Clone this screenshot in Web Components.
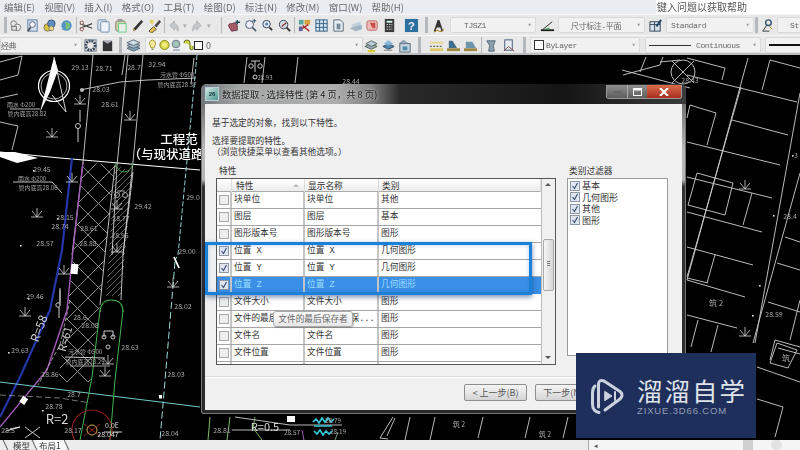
<!DOCTYPE html>
<html>
<head>
<meta charset="utf-8">
<style>
  html, body { margin: 0; padding: 0; background: #000; overflow: hidden; }
  body { font-family: "Noto Sans CJK SC", "Liberation Sans", sans-serif; }
</style>
</head>
<body>
<cad-app>
  <menu-bar></menu-bar>
  <tool-bar row="1"></tool-bar>
  <tool-bar row="2"></tool-bar>
  <cad-canvas>
    <prop-dialog></prop-dialog>
    <brand-badge></brand-badge>
  </cad-canvas>
  <tab-strip></tab-strip>
</cad-app>

<script>
const CJK = '"Noto Sans CJK SC", "Liberation Sans", sans-serif';
const MONO = '"Liberation Mono", "Noto Sans CJK SC", monospace';

class CadApp extends HTMLElement {
  constructor() {
    super();
    this.attachShadow({ mode: 'open' });
    this.shadowRoot.innerHTML = `
      <style>
        :host { display: grid; width: 800px; height: 450px; grid-template-rows: 14px 21px 20px 385px 10px; overflow: hidden; }
      </style>
      <slot></slot>`;
  }
}

class MenuBar extends HTMLElement {
  constructor() {
    super();
    this.attachShadow({ mode: 'open' });
    const items = ['编辑(E)', '视图(V)', '插入(I)', '格式(O)', '工具(T)', '绘图(D)', '标注(N)', '修改(M)', '窗口(W)', '帮助(H)'];
    this.shadowRoot.innerHTML = `
      <style>
        :host { display: flex; align-items: center; background: #e9edf2; color: #6a6a6a; font: 9.5px/14px ${CJK}; filter: blur(.3px); }
        .items { display: flex; gap: 9.2px; padding-left: 4px; flex: 1; }
        .help { width: 144px; height: 14px; background: #fff; color: #555; padding-left: 1px; box-sizing: border-box; font-size: 10px; }
      </style>
      <div class="items">${items.map(t => `<span>${t}</span>`).join('')}</div>
      <div class="help">键入问题以获取帮助</div>`;
  }
}

const ICONS = {
  print: '<circle cx="6" cy="6" r="3" fill="none" stroke="#777"/><circle cx="10" cy="10" r="3.5" fill="#eee" stroke="#777"/><rect x="4" y="9" width="5" height="4" fill="#ddd" stroke="#777"/>',
  preview: '<rect x="3" y="2" width="10" height="12" fill="#cfe3f4" stroke="#5b7d9e"/><circle cx="8" cy="7" r="3" fill="#fff" stroke="#557"/><path d="M3 14l3-4" stroke="#555" stroke-width="2"/>',
  publish: '<circle cx="6" cy="10" r="4" fill="#d9c23c" stroke="#776"/><circle cx="10" cy="6" r="4" fill="#5a8fc8" stroke="#456"/><circle cx="10" cy="11" r="2.5" fill="#eadf88" stroke="#776"/>',
  globe: '<circle cx="8" cy="8" r="5.5" fill="#4f93c9"/><path d="M5 4q3 2 2 5t3 3q3-3 1-7z" fill="#7fbf7a"/><path d="M3 13l2-2" stroke="#999"/>',
  cut: '<path d="M1 6l13 5M1 11l13-5" stroke="#444" stroke-width="1.2"/><circle cx="3" cy="5" r="1.8" fill="#fff" stroke="#844"/><circle cx="3" cy="12" r="1.8" fill="#fff" stroke="#844"/>',
  copy: '<rect x="2" y="2" width="9" height="11" rx="1" fill="#dfeaf5" stroke="#6d8aa6"/><rect x="5" y="4" width="9" height="11" rx="1" fill="#eef4fa" stroke="#6d8aa6"/>',
  paste: '<rect x="3" y="3" width="10" height="11" rx="2" fill="#d7d39a" stroke="#777"/><rect x="6" y="6" width="8" height="9" fill="#e7efe6" stroke="#6c8"/><rect x="5" y="1" width="5" height="3" fill="#999"/>',
  brush: '<path d="M3 14l3-1 8-9-2-2-8 9z" fill="#333"/><path d="M3 14l1-3 2 2z" fill="#c9a34e"/>',
  match: '<path d="M2 14l5-5 3 3-5 4z" fill="#e0bf47" stroke="#654"/><path d="M8 8l5-6 2 2-5 6z" fill="#4a4a4a"/><rect x="3" y="2" width="4" height="4" fill="#e8d16a"/>',
  undo: '<path d="M4 8l5-5v3q5 1 4 8q-2-4-4-4v3z" fill="#c4c7ca" stroke="#b3b6ba"/>',
  redo: '<path d="M12 8l-5-5v3q-5 1-4 8q2-4 4-4v3z" fill="#c4c7ca" stroke="#b3b6ba"/>',
  pan: '<path d="M3 9q-1-3 3-3l4-1 2 3v5l-6 1z" fill="#a65a68" stroke="#634"/><path d="M12 2v5M10 4.5h5" stroke="#245" stroke-width="1.4"/>',
  zoomplus: '<circle cx="7" cy="7" r="4.2" fill="#eef" stroke="#456"/><path d="M10 10l4 4" stroke="#456" stroke-width="1.6"/><path d="M12 1v4M10 3h4" stroke="#256" stroke-width="1"/>',
  zoomwin: '<circle cx="7" cy="6.5" r="4" fill="#dfe8f2" stroke="#345"/><circle cx="7" cy="6.5" r="1.6" fill="#58a"/><path d="M10 10l3 3" stroke="#333" stroke-width="2"/>',
  zoomback: '<circle cx="7" cy="7" r="4.5" fill="#cfdbe6" stroke="#345"/><path d="M5 9l5-4" stroke="#933" stroke-width="1.4"/><path d="M10 10l4 4" stroke="#333" stroke-width="2"/>',
  props: '<rect x="2" y="2" width="5" height="5" fill="#5a9"/><rect x="8" y="2" width="6" height="5" fill="#d6a23c"/><path d="M3 13l9-6M6 8l7 6" stroke="#a33" stroke-width="1.6"/><rect x="2" y="9" width="4" height="5" fill="#669"/>',
  grid: '<rect x="2" y="2" width="12" height="12" fill="#d5e4ef" stroke="#2f5d82"/><path d="M6 2v12M10 2v12M2 6h12M2 10h12" stroke="#2f5d82"/>',
  doc: '<path d="M3 2h7l3 3v9h-10z" fill="#e8eef3" stroke="#567"/><path d="M6 6h4v6H6z" fill="#789"/>',
  stack: '<path d="M2 11l8-4 5 1v4l-7 2z" fill="#9fb4c5"/><path d="M4 7l9-3 1 3-9 3z" fill="#c2ced8"/>',
  red: '<rect x="2" y="3" width="11" height="10" rx="2" fill="#eebcb9" stroke="#b66"/><path d="M5 5h6v6H8z" fill="#c9504d"/>',
  calc: '<rect x="3" y="1" width="10" height="14" fill="#3a3a3a"/><rect x="5" y="3" width="6" height="2" fill="#cfe"/><path d="M5 7h6M5 9.5h6M5 12h6" stroke="#ddd" stroke-dasharray="1.5 1"/>',
  help: '<rect x="1" y="1" width="14" height="14" fill="#2d6f9f"/><text x="8" y="12.5" text-anchor="middle" font-size="12" font-weight="700" font-family="Liberation Sans" fill="#eef">?</text>',
  textstyle: '<path d="M3 14l4-12h2l4 12h-2l-1-4H6l-1 4z" fill="#333"/><path d="M3 15q4-3 6-1t5-2" stroke="#a70" fill="none"/>',
  dimstyle: '<path d="M1 13h14" stroke="#222" stroke-width="2"/><path d="M2 13l11-9" stroke="#222"/><path d="M4 12l6-2v2z" fill="#3a5"/>',
  tablestyle: '<rect x="2" y="4" width="11" height="10" fill="#d8e3ec" stroke="#345"/><path d="M2 7h11M7 4v10" stroke="#345"/><path d="M9 9l5-7" stroke="#246" stroke-width="2"/>',
  mleader: '<circle cx="9" cy="5" r="3" fill="none" stroke="#357" stroke-width="1.5"/><path d="M7 8l-4 6h7" fill="none" stroke="#333"/><path d="M10 9l3 3" stroke="#a70"/>',
  wsset: '<circle cx="8" cy="8" r="5" fill="none" stroke="#345" stroke-width="3" stroke-dasharray="2 1"/><rect x="2" y="2" width="12" height="12" fill="none" stroke="#678"/>',
  wslock: '<rect x="3" y="3" width="10" height="11" fill="#333"/><path d="M3 3l5 3 5-3" fill="#aab"/>',
  layers: '<path d="M1 11l7 3 7-3-7-3z" fill="#7fa0b0" stroke="#567"/><path d="M1 8l7 3 7-3-7-3z" fill="#a5bcc8" stroke="#567"/><path d="M1 5l7 3 7-3-7-3z" fill="#cfdde4" stroke="#567"/>',
  layerset: '<path d="M1 9l7 3 6-3-7-3z" fill="#9ab" stroke="#565"/><path d="M2 6l6 3 6-3-6-3z" fill="#bcd" stroke="#565"/><path d="M4 14h8" stroke="#dc3" stroke-width="2.5"/>',
  layerprev: '<path d="M2 9l6 3 6-3-6-3z" fill="#4d86b0" stroke="#345"/><path d="M3 6l5-4 5 4-5 2z" fill="#8cb8d8"/><path d="M3 13h9" stroke="#777"/>',
  layerstate: '<rect x="3" y="6" width="11" height="9" fill="#c5d5e0" stroke="#567"/><path d="M2 5l5-3 5 3" fill="#89a"/><rect x="6" y="9" width="5" height="4" fill="#58a"/>',
  dim1: '<path d="M1 9h14" stroke="#665" stroke-dasharray="2 1.5" stroke-width="1.4"/><rect x="1" y="11" width="14" height="3" fill="#e0c868"/><rect x="1" y="4" width="14" height="2" fill="#e8d48a"/>',
  dim2: '<path d="M3 3h4l5 8H3z" fill="#3f6f8d"/><rect x="1" y="11" width="14" height="3" fill="#a08840"/>',
  dim3: '<path d="M3 4h7l4 7H3z" fill="#6d96ac"/><rect x="1" y="11" width="14" height="3" fill="#a08840"/>',
  dim4: '<path d="M3 3h9l-2 5 1 6H5l1-6z" fill="#8aa2b0" stroke="#567"/>',
  dim5: '<rect x="4" y="2" width="8" height="11" fill="#e6eef4" stroke="#457"/><path d="M3 14l5-5 6 5" fill="none" stroke="#844"/>'
};

class TbIcon extends HTMLElement {
  constructor() {
    super();
    this.attachShadow({ mode: 'open' });
  }
  connectedCallback() {
    const name = this.getAttribute('name');
    const w = this.getAttribute('w') || 17;
    const lead = this.hasAttribute('drop');
    this.shadowRoot.innerHTML = `
      <style>
        :host { display: flex; width: ${w}px; flex: none; align-items: center; justify-content: ${lead ? 'flex-start' : 'center'}; gap: 2px; color: #aaa; font-size: 7px; }
        svg { width: 15px; height: 15px; display: block; flex: none; }
      </style>
      <svg viewBox="0 0 16 16">${ICONS[name] || ''}</svg>${lead ? '<span>▾</span>' : ''}`;
  }
}

class TbSep extends HTMLElement {
  constructor() {
    super();
    this.attachShadow({ mode: 'open' });
  }
  connectedCallback() {
    const grip = this.hasAttribute('grip');
    const w = this.getAttribute('w') || 4;
    this.shadowRoot.innerHTML = `
      <style>
        :host { display: block; flex: none; width: ${w}px; height: 16px; align-self: center;
          background: linear-gradient(#b4b8bc,#b4b8bc) center/${grip ? '3px' : '1px'} 100% no-repeat; }
      </style>`;
  }
}

class TbCombo extends HTMLElement {
  constructor() {
    super();
    this.attachShadow({ mode: 'open' });
  }
  connectedCallback() {
    const w = this.getAttribute('w');
    const pad = this.getAttribute('pad') || 4;
    this.shadowRoot.innerHTML = `
      <style>
        :host { display: flex; flex: none; box-sizing: border-box; width: ${w}px; height: 16px; align-items: center; align-self: center;
          background: #f1f1f1; border: 1px solid #d9d9d9; border-radius: 2px; color: #666; font: 8px ${MONO}; letter-spacing: -.4px; padding-left: ${pad}px; }
        .t { flex: 1; display: flex; align-items: center; gap: 1px; white-space: nowrap; overflow: hidden; min-width: 0; }
        .a { flex: none; width: 11px; text-align: center; color: #999; font-size: 7px; line-height: 14px; }
      </style>
      <div class="t"><slot></slot></div>
      ${this.hasAttribute('noarrow') ? '' : '<div class="a">▾</div>'}`;
  }
}

class ToolBar extends HTMLElement {
  constructor() {
    super();
    this.attachShadow({ mode: 'open' });
  }
  connectedCallback() {
    const ic = (n, w) => `<tb-icon name="${n}"${w ? ` w="${w}"` : ''}></tb-icon>`;
    const sep = (w) => `<tb-sep w="${w || 4}"></tb-sep>`;
    const grip = (w) => `<tb-sep grip w="${w || 5}"></tb-sep>`;
    const gap = (w) => `<div style="width:${w}px;flex:none"></div>`;
    const row1 = `
      ${gap(3)}${grip(4)}
      ${ic('print')}${ic('preview')}${ic('publish')}${ic('globe')}${sep(3)}
      ${ic('cut')}${ic('copy')}${ic('paste')}${ic('brush')}${ic('match')}${sep(3)}
      <tb-icon name="undo" w="24" drop></tb-icon><tb-icon name="redo" w="28" drop></tb-icon>${sep(7)}
      ${ic('pan')}${ic('zoomplus')}${ic('zoomwin')}${ic('zoomback')}${sep(3)}
      ${ic('props')}${ic('grid')}${ic('doc')}${ic('stack')}${ic('red')}${ic('calc')}
      ${gap(5)}${ic('help')}${gap(4)}${grip(5)}${gap(2)}
      ${ic('textstyle', 15)}${gap(4)}
      <tb-combo w="86" pad="13">TJSZ1</tb-combo>${ic('dimstyle', 22)}
      <tb-combo w="87" pad="12"><span style="font:9.5px ${CJK};letter-spacing:0">尺寸标注-平面</span></tb-combo>${ic('tablestyle', 21)}
      <tb-combo w="88">Standard</tb-combo>${grip(4)}${ic('mleader', 18)}${gap(1)}
      <tb-combo w="40" pad="12" noarrow>St</tb-combo>`;
    const row2 = `
      <tb-combo w="82" pad="0"><span style="font:10px ${CJK};letter-spacing:0">经典</span></tb-combo>
      ${ic('wsset')}${ic('wslock')}${gap(2)}${grip(5)}${gap(2)}
      ${ic('layers', 17)}${gap(3)}
      <tb-combo w="218" pad="1"><layer-chips></layer-chips></tb-combo>
      ${ic('layerset')}${ic('layerprev')}${ic('layerstate', 15)}${gap(5)}${grip(5)}${gap(6)}
      ${ic('dim1')}${ic('dim2')}${ic('dim3')}${sep(4)}${ic('dim4')}${ic('dim5')}${gap(5)}${grip(5)}${gap(3)}
      <tb-combo w="110" pad="3"><span style="display:inline-block;width:8px;height:8px;border:1px solid #333;background:#fff;margin-right:1px"></span>ByLayer</tb-combo>
      ${gap(5)}
      <tb-combo w="116" pad="3"><span style="display:inline-block;width:42px;height:1px;background:#333;margin-right:4px"></span>Continuous</tb-combo>
      ${gap(4)}
      <tb-combo w="40" pad="3" noarrow><span style="display:inline-block;width:32px;height:2px;background:#111"></span></tb-combo>`;
    this.shadowRoot.innerHTML = `
      <style>
        :host { display: flex; align-items: center; background: #e8e8e8; overflow: hidden; filter: blur(.4px); color: #555;
          border-top: 1px solid #f6f6f6; box-sizing: border-box; }
        :host([row="2"]) { border-bottom: 2px solid #bdbdbd; padding-top: 1px; }
      </style>
      ${this.getAttribute('row') === '1' ? row1 : row2}`;
  }
}

class LayerChips extends HTMLElement {
  constructor() {
    super();
    this.attachShadow({ mode: 'open' });
    this.shadowRoot.innerHTML = `
      <style>
        :host { display: flex; align-items: center; gap: 1px; color: #666; font: 9px ${CJK}; letter-spacing: 0; }
        svg { width: 11px; height: 12px; display: block; }
        .sq { width: 7px; height: 7px; border: 1px solid #222; background: #fff; margin: 0 2px 0 -1px; }
      </style>
      <svg viewBox="0 0 11 12"><path d="M5.500 1a3.500 3.500 0 0 1 2 6l-.5 2H4l-.5-2a3.500 3.500 0 0 1 2-6z" fill="#f4ec9a" stroke="#a89a3a"/><path d="M4.500 10.500h2" stroke="#888"/></svg>
      <svg viewBox="0 0 11 12"><circle cx="5.500" cy="6" r="4.600" fill="#dcd84a" stroke="#8a8a20"/><circle cx="5.500" cy="6" r="2.400" fill="#f2ee8a"/></svg>
      <svg viewBox="0 0 11 12"><circle cx="5" cy="5" r="3.800" fill="#a5c5b8" stroke="#678"/><path d="M2 11h7" stroke="#789"/></svg>
      <svg viewBox="0 0 11 12"><path d="M1 4a3 3 0 0 1 6 0v6a2 2 0 0 0 3 0V7" fill="#cfd64c" stroke="#667020"/></svg>
      <div class="sq"></div><span>0</span>`;
  }
}

// 图纸线条，坐标就是页面坐标
const LINES = [
  // left block outlines
  ['0,62 22,56 18,75 0,80'], ['0,122 18,126 12,150'], ['0,98 18,94'],
  ['93,55 83,162 72,255'], ['128,55 117,165 112,255'], ['143,55 133,162 123,255'], ['125,55 122,75'],
  ['0,152 60,158 200,170', '#fff', 1.2],
  ['13,182 52,182 62,193'], ['10,109 40,109'], ['120,82 148,80 196,78'], ['80,90 120,82'],
  // hatch edge
  ['115,165 105,255 100,305'], ['133,172 123,255 121,300'],
  // colored routes
  ['72,158 62,250 50,310 20,377 0,417', '#2436a8', 2.2],
  ['83,162 73,250 67,310 47,370 0,427', '#a25ab8', 1.4],
  ['197,55 178,255 175,260', '#8fcfd0', 1, '5 2'], ['175,262 160,440', '#9fdcdc', 1, '7 3'],
  ['0,382 200,407', '#72cbc4', 1],
  ['100,310 92,377 80,440', '#45b552', 1], ['123,310 115,380 110,440', '#45b552', 1],
  ['0,395 60,398 90,403', '#aaa', .7, '6 3'],
  ['65,357 105,358', '#ccc', 1], ['70,366 110,366', '#ccc', .8],
  ['60,305 60,290', '#ccc'], ['70,300 60,345 38,385', '#ccc', .7, '4 2'],
  ['10,429 20,427 6,431', '#fff'], ['25,427 40,438 M40,427 25,438', '#ddd'], ['104,432 122,432', '#ddd'],
  // top center
  ['247,57 244,83'], ['265,57 262,83'], ['298,57 295,83'], ['194,58 191,84'],
  // top right of dialog
  ['623,75 660,65 663,57'], ['622,70 690,88'], ['646,57 640,72'], ['660,62 680,60'],
  ['672,61 694,83'], ['694,61 672,83'],
  // right side plots
  ['687,58 725,68 722,80'], ['687,75 797,102'], ['748,58 687,280'], ['741,87 687,277'],
  ['770,60 762,90'], ['770,60 800,68'], ['732,120 788,135'], ['800,93 755,343'],
  ['687,142 780,165'], ['690,105 716,113 707,145'], ['690,105 687,118'],
  ['697,173 733,183 725,215 688,205 697,173'], ['687,177 772,198'], ['752,193 743,225'],
  ['687,212 762,232'], ['687,247 753,265'], ['715,255 707,283'], ['687,278 708,283'],
  ['687,280 745,297'], ['687,315 737,328'], ['698,320 691,347'], ['718,325 711,352'],
  ['800,173 753,343'], ['785,237 800,242'], ['777,263 800,270'],
  ['768,302 800,312'], ['775,340 800,347'], ['775,340 770,360'], ['778,348 800,354'],
  ['777,343 797,350 788,368 770,363 777,343'], ['757,367 800,382'],
  ['757,399 783,407 775,437'], ['800,300 790,340'],
  // under the dialog
  ['210,417 208,440', '#7fbe6e', 1], ['230,417 227,440', '#7fbe6e', 1], ['255,417 253,428 262,440', '#6fb05a', 1],
  ['235,417 290,425 342,425'], ['232,430 290,430'], ['302,430 304,440', '#a25ab8', 1],
  ['393,417 380,438 388,439'], ['395,418 387,436'], ['410,417 405,440'], ['435,417 430,440'], ['483,417 478,438'],
  ['530,417 525,438'], ['568,417 563,438'], ['335,440 338,432', '#8a8']
];

const LABELS = [
  ['29.13',80,70],['28.71',104,71],['28.7',134,70],['32.94',157,67],['28.03',101,92],['28.61',110,107],
  ['污水管 Φ500',177,77,6],['管内底高28.37',177,87,6],['雨水 Φ200',21,107,6],['管内底高28.82',27,116,6],
  ['29.45',42,172],['雨水 Φ200',32,181,6],['管内底高28.06',38,190,6],['29.42',143,209],['28.15',65,220],
  ['28.74',60,229],['28.61',89,231],['28.77',121,221],['28.57',45,246],['28.88',88,246],['28.95',120,238],
  ['29.0',193,200],['29.00',187,254],['29.46',35,299],['29.63',20,353],['28.08',90,328],['28.63',130,350],
  ['28.03',176,377],['28.02',183,309],['28.86',50,377],['28.78',54,409],['28.17',73,433],['28.04',170,436],
  ['污水管 Φ500',85,354,6],['管内底高28.29',85,364,6],['28.6',80,320],['28.7',74,397],
  ['28.5',8,433],['28.047',108,437,7,'#ddd'],['0.0E',112,428,7,'#ddd'],
  ['28.81',222,433],['R=0.5',265,431,11,'#ddd'],['28.57',292,435,6.5],['28.79',333,423,6.5],['28.19',338,434,6.5],
  ['筑 2',459,427],['筑 2',545,437],['28.43',690,83,7],['筑 2',716,306,8],['28.59',774,317],['28.4',790,219],
  ['3',796,158],['筑',786,361,8],['28.44',351,84]
];

const TREES = [[52,133],[80,100],[130,116],[72,178],[37,213],[25,312],[117,205],[64,270],[108,360],[117,248],[173,283],[105,372],[745,185],[745,332]];
const DOTS = [[33,170],[20,245],[28,298],[8,352],[57,218],[792,155],[773,215],[759,285],[752,315],[42,410]];

class CadCanvas extends HTMLElement {
  constructor() {
    super();
    this.attachShadow({ mode: 'open' });
  }
  connectedCallback() {
    const lines = LINES.map(([pts, c, w, dash]) => {
      const segs = pts.split(' M');
      return segs.map(p => `<polyline points="${p}" stroke="${c || '#cfcfcf'}" stroke-width="${w || .9}"${dash ? ` stroke-dasharray="${dash}"` : ''}/>`).join('');
    }).join('');
    const labels = LABELS.map(([t, x, y, s, c]) => `<text x="${x}" y="${y}" font-size="${s || 7}" fill="${c || '#a6a6a6'}" text-anchor="middle">${t}</text>`).join('');
    const trees = TREES.map(([x, y]) => `<g transform="translate(${x},${y})" stroke="#d5d5d5" stroke-width=".8"><path d="M-6 4H6M0 4V-5M0 4L-5 -2M0 4L5 -2"/></g>`).join('');
    const dots = DOTS.map(([x, y]) => `<rect x="${x}" y="${y}" width="1.600" height="1.600" fill="#ddd"/>`).join('');
    this.shadowRoot.innerHTML = `
      <style>
        :host { display: block; position: relative; background: #000; overflow: hidden; }
        .draw { display: block; width: 800px; height: 385px; filter: blur(.35px); }
        text { font-family: ${CJK}; }
      </style>
      <svg class="draw" viewBox="0 55 800 385" fill="none">
        <defs>
          <pattern id="cross" width="21" height="21" patternUnits="userSpaceOnUse" patternTransform="translate(4 4)">
            <path d="M0 0L21 21M21 0L0 21" stroke="#a8a8a8" stroke-width=".8"/>
          </pattern>
          <pattern id="hatch" width="6" height="6" patternUnits="userSpaceOnUse">
            <path d="M0 6L6 0" stroke="#8c8c8c" stroke-width=".7"/>
          </pattern>
        </defs>
        <polygon points="83,162 115,165 105,255 100,305 90,382 58,382 65,330 73,255" fill="url(#cross)"/>
        <polygon points="115,165 133,172 121,296 106,296" fill="url(#hatch)"/>
        ${lines}
        <path d="M100 312 Q101 300 111 300 Q123 300 123 312" stroke="#45b552" stroke-width="1.100"/>
        <path d="M115 163 Q118 172 124 172 Q131 172 133 163" stroke="#3f9f4a" stroke-width="1"/>
        <polygon points="0,152 15,152 38,158 17,163 0,157" fill="#fff"/>
        <circle cx="54" cy="86" r="15.500" stroke="#fff" stroke-width="1.200"/>
        <circle cx="54" cy="86" r="13" stroke="#ddd" stroke-width=".8"/>
        <polygon points="54,57 40,112 50,92 58,70" fill="#fff"/>
        <polyline points="54,57 66,112 52,95" stroke="#eee" stroke-width=".9"/>
        <circle cx="78" cy="126" r="2.500" stroke="#ccc"/><path d="M80 110V122M78 128V142" stroke="#ccc"/>
        <circle cx="82" cy="90" r="2" fill="#bbb"/>
        <circle cx="58" cy="305" r="2.200" stroke="#ccc"/><path d="M60 288V303M59 307V318" stroke="#ccc"/>
        <path d="M104 331V337M113 331V337M104 331H113" stroke="#ccc"/><circle cx="104" cy="337" r="2" stroke="#ccc"/><circle cx="113" cy="337" r="2" stroke="#ccc"/>
        <circle cx="108" cy="347" r="2" stroke="#ccc"/>
        <circle cx="117" cy="195" r="2.500" stroke="#aaa"/><circle cx="125" cy="195" r="2.500" stroke="#aaa"/><path d="M117 191H125" stroke="#aaa"/>
        <path d="M251 61H260M255 61V72" stroke="#ccc"/><circle cx="251" cy="66" r="2.200" stroke="#ccc"/><circle cx="260" cy="66" r="2.200" stroke="#ccc"/><circle cx="255" cy="77" r="2" stroke="#ccc"/>
        <text x="265" y="80" font-size="6" fill="#aaa" text-anchor="middle">28.93</text>
        <circle cx="683" cy="72" r="12" stroke="#bbb"/>
        <circle cx="92" cy="430" r="20" stroke="#8e2020" stroke-width="1.200"/>
        <circle cx="92" cy="430" r="5" stroke="#c9b060"/><path d="M84 424L100 436M100 424L84 436" stroke="#8e2020"/>
        <rect x="71" y="264" width="7" height="10" fill="#fff" transform="rotate(5 74 269)"/>
        <rect x="21" y="397" width="6" height="7" fill="#fff" transform="rotate(35 24 400)"/>
        <rect x="287" y="416" width="8" height="6" fill="#fff"/>
        <rect x="159" y="395" width="3" height="3.500" fill="#fff"/>
        <path d="M174 257L179 268" stroke="#fff" stroke-width="1.800"/>
        <path d="M313 422l3-3 3 4 3-5 3 4 3-4 3 4 3-3M314 426H332M314 431l3 3 3-4 3 5 3-4 3 3 3-3" stroke="#35c5d8" stroke-width="1.700"/>
        <text x="179" y="144" font-size="12.500" fill="#fff" text-anchor="middle" font-weight="500">工程范</text>
        <text x="166" y="159" font-size="12.500" fill="#fff" text-anchor="middle" font-weight="500">（与现状道路</text>
        <text transform="translate(43 330) rotate(-70)" font-size="12" fill="#d0d0d0" text-anchor="middle">R=58</text>
        <text transform="translate(69 340) rotate(-74)" font-size="11" fill="#d0d0d0" text-anchor="middle">R=61</text>
        <text x="57" y="424" font-size="13" fill="#d8d8d8" text-anchor="middle">R=2</text>
        ${trees}${dots}${labels}
      </svg>
      <slot></slot>`;
  }
}

class PropDialog extends HTMLElement {
  constructor() {
    super();
    this.attachShadow({ mode: 'open' });
    const rows = [
      ['0', '块单位', '块单位', '其他'],
      ['0', '图层', '图层', '基本'],
      ['0', '图形版本号', '图形版本号', '图形'],
      ['1', '位置 X', '位置 X', '几何图形'],
      ['1', '位置 Y', '位置 Y', '几何图形'],
      ['2', '位置 Z', '位置 Z', '几何图形'],
      ['0', '文件大小', '文件大小', '图形'],
      ['0', '文件的最后保存者', '文件的最后保...', '图形'],
      ['0', '文件名', '文件名', '图形'],
      ['0', '文件位置', '文件位置', '图形'],
      ['0', '', '', '']
    ];
    this.shadowRoot.innerHTML = `
      <style>
        :host { position: absolute; left: 201px; top: 29px; width: 485px; height: 330px; box-sizing: border-box; display: flex; flex-direction: column;
          border-radius: 6px 6px 3px 3px; padding: 0 4px 4px; color: #333; font: 8.7px/11px ${MONO};
          background: linear-gradient(#555 0, #b9b9b9 20%, #b5b5b5 29%, #333 31%, #2a2a2a 100%); box-shadow: 0 0 0 1px #777 inset; filter: blur(.3px); }
        .title { flex: none; height: 20px; margin: 0 -4px; padding: 0 4px; display: flex; align-items: center; gap: 3px; border-radius: 6px 6px 0 0;
          background: linear-gradient(90deg, #70777a 0, #a3a5a5 8%, #adadad 28%, #808080 35%, #2a2a2a 41%, #151515 75%, #3c3c3c 100%); }
        .app { width: 12px; height: 12px; background: linear-gradient(135deg,#cfe6e0,#4b9a92); border: 1px solid #bcd; color: #134; font: 700 6px/12px "Liberation Sans", sans-serif; text-align: center; }
        .cap { flex: 1; font: 9.3px ${CJK}; color: #222; white-space: nowrap; text-shadow: 0 0 3px #ddd; }
        .ctl { display: flex; height: 13px; align-self: flex-start; margin-top: 1px; border: 1px solid #999; border-top: 0; border-radius: 0 0 3px 3px; overflow: hidden; }
        .ctl div { display: flex; align-items: center; justify-content: center; background: linear-gradient(#8f8f8f,#5d5d5d); }
        .ctl .min { width: 20px; } .ctl .max { width: 19px; border-left: 1px solid #aaa; } 
        .ctl .cls { width: 34px; background: linear-gradient(#dc6a4c,#a92f1f); }
        .client { flex: 1; background: #f0f0f0; display: flex; flex-direction: column; padding: 13px 13px 0 7px; min-height: 0; }
        .client p { margin: 0; font: 8.7px/11px ${CJK}; }
        .intro { margin-bottom: 7px !important; }
        .lists { display: grid; grid-template-columns: 340px 101px; gap: 0 11px; margin: 8px 0 0 4px; }
        .lbl { font: 8.7px/11px ${CJK}; padding: 0 2px 2px 3px; height: 13px; box-sizing: border-box; }
        .table { height: 187px; box-sizing: border-box; border: 1px solid #555; background: #fff; display: flex; overflow: hidden; }
        .tcol { flex: 1; min-width: 0; display: flex; flex-direction: column; overflow: hidden; }
        .head { flex: none; display: grid; grid-template-columns: 15px 73px 74px 1fr; height: 13px; background: linear-gradient(#fff,#ececec); border-bottom: 1px solid #aaa; box-sizing: border-box; font: 8.7px/13px ${CJK}; }
        .head span { padding-left: 3px; border-right: 1px solid #ddd; position: relative; }
        .head span:nth-child(2) { padding-left: 4px; }
        .head i { position: absolute; right: 5px; top: 5px; width: 0; height: 0; border: 3.500px solid transparent; border-top: 0; border-bottom: 3.500px solid #bbb; }
        .sb { flex: none; width: 13px; background: #f0f0f0; border-left: 1px solid #bbb; position: relative; }
        .sb b { position: absolute; left: 1px; right: 1px; top: 60px; height: 50px; border: 1px solid #aaa; border-radius: 2px; background: linear-gradient(90deg,#f6f6f6,#d5d5d5); }
        .sb b::after { content: ""; position: absolute; left: 3px; right: 3px; top: 21px; height: 6px; background: repeating-linear-gradient(#777 0,#777 1px,transparent 1px,transparent 2px); }
        .sb u { position: absolute; left: 3px; width: 0; height: 0; border: 3px solid transparent; }
        .sb .up { top: 4px; border-top: 0; border-bottom: 3px solid #555; }
        .sb .dn { bottom: 5px; border-bottom: 0; border-top: 3px solid #555; }
        .filter { height: 178px; box-sizing: border-box; border: 1px solid #9b9b9b; background: #fff; padding: 1px 0 0 2px; }
        .sepline { height: 1px; background: #dcdcdc; margin: 11px -6px 0 -7px; box-shadow: 0 1px 0 #fff; }
        .btns { display: flex; justify-content: flex-start; gap: 8px; margin: 7px 0 0 252px; }
        .hl { position: absolute; left: 4px; top: 158px; width: 327px; height: 53px; box-sizing: border-box; border: 3px solid #1a80d8; box-shadow: 0 2px 5px rgba(0,50,110,.55), inset 0 0 4px rgba(30,110,200,.35); }
        .tip { position: absolute; left: 72px; top: 227px; width: 80px; height: 16px; box-sizing: border-box; border: 1px solid #aaa; border-radius: 3px; background: linear-gradient(#fbfbfb,#e6e6e6); color: #666; font: 8.700px/14px ${CJK}; text-align: center; white-space: nowrap; box-shadow: 1px 1px 1px rgba(0,0,0,.2); }
      </style>
      <div class="title">
        <div class="app">26</div>
        <div class="cap">数据提取 - 选择特性 (第 4 页，共 8 页)</div>
        <div class="ctl">
          <div class="min"><svg width="9" height="3"><rect width="9" height="2" y="1" fill="#666"/></svg></div>
          <div class="max"><svg width="9" height="8"><rect x=".5" y=".5" width="8" height="7" fill="none" stroke="#fff"/><rect x=".5" y=".5" width="8" height="2" fill="#fff"/></svg></div>
          <div class="cls"><svg width="10" height="8"><path d="M1 0L9 8M9 0L1 8" stroke="#fff" stroke-width="2"/></svg></div>
        </div>
      </div>
      <div class="client">
        <p class="intro">基于选定的对象，找到以下特性。</p>
        <p>选择要提取的特性。</p>
        <p>（浏览快捷菜单以查看其他选项。）</p>
        <div class="lists">
          <div>
            <div class="lbl">特性</div>
            <div class="table">
              <div class="tcol">
                <div class="head"><span></span><span>特性<i></i></span><span>显示名称</span><span>类别</span></div>
                ${rows.map(r => `<prop-row state="${r[0]}" a="${r[1]}" b="${r[2]}" c="${r[3]}"></prop-row>`).join('')}
              </div>
              <div class="sb"><u class="up"></u><b></b><u class="dn"></u></div>
            </div>
          </div>
          <div>
            <div class="lbl" style="padding-left:2px">类别过滤器</div>
            <div class="filter">
              <filter-item>基本</filter-item>
              <filter-item>几何图形</filter-item>
              <filter-item>其他</filter-item>
              <filter-item>图形</filter-item>
            </div>
          </div>
        </div>
        <div class="sepline"></div>
        <div class="btns"><wiz-button>&lt; 上一步(B)</wiz-button><wiz-button>下一步(N) &gt;</wiz-button></div>
      </div>
      <div class="hl"></div>
      <div class="tip">文件的最后保存者</div>`;
  }
}

const CHECK = '<svg viewBox="0 0 10 10" width="10" height="10"><rect x=".5" y=".5" width="9" height="9" fill="#dfe6f1" stroke="#8d97a5"/><path d="M2.500 5l2 2.500 3-5.500" fill="none" stroke="#334a70" stroke-width="1.100"/></svg>';
const UNCHECK = '<svg viewBox="0 0 10 10" width="10" height="10"><rect x=".5" y=".5" width="9" height="9" fill="#eceeee" stroke="#a8a8a8"/></svg>';

class PropRow extends HTMLElement {
  constructor() {
    super();
    this.attachShadow({ mode: 'open' });
  }
  connectedCallback() {
    const state = this.getAttribute('state');
    this.shadowRoot.innerHTML = `
      <style>
        :host { display: grid; flex: none; grid-template-columns: 15px 73px 74px 1fr; height: 17px; box-sizing: border-box; border-bottom: 1px solid #a5a5a5; font: 8.7px/16px ${MONO}; color: #333; }
        :host([state="2"]) { background: #3a8fe6; color: #9bdcff; border-bottom-color: #3a8fe6; }
        div { border-right: 2px solid #c4c4c4; padding-left: 2px; white-space: nowrap; overflow: hidden; }
        div:last-child { border-right: 0; }
        .ck { padding: 3px 0 0 2px; box-sizing: border-box; }
        svg { display: block; }
      </style>
      <div class="ck">${state === '0' ? UNCHECK : CHECK}</div>
      <div>${this.getAttribute('a')}</div>
      <div>${this.getAttribute('b')}</div>
      <div>${this.getAttribute('c')}</div>`;
  }
}

class FilterItem extends HTMLElement {
  constructor() {
    super();
    this.attachShadow({ mode: 'open' });
    this.shadowRoot.innerHTML = `
      <style>
        :host { display: flex; align-items: center; gap: 2px; height: 11.500px; font: 9px/11px ${CJK}; }
        svg { display: block; }
      </style>
      ${CHECK}<slot></slot>`;
  }
}

class WizButton extends HTMLElement {
  constructor() {
    super();
    this.attachShadow({ mode: 'open' });
    this.shadowRoot.innerHTML = `
      <style>
        :host { display: flex; align-items: center; justify-content: center; width: 63px; height: 17px; box-sizing: border-box; border: 1px solid #8e8e8e; border-radius: 2px;
          background: linear-gradient(#f4f4f4,#e6e6e6 50%,#d4d4d4); color: #555; font: 9px/15px ${CJK}; white-space: nowrap; }
      </style>
      <slot></slot>`;
  }
}

class BrandBadge extends HTMLElement {
  constructor() {
    super();
    this.attachShadow({ mode: 'open' });
    this.shadowRoot.innerHTML = `
      <style>
        :host { position: absolute; left: 576px; top: 298px; width: 180px; height: 85px; background: #1f2f5b; display: flex; align-items: center; box-sizing: border-box; padding: 1px 0 0 15px; gap: 12px; color: #dfe3ea; }
        svg { display: block; flex: none; }
        .txt { display: flex; flex-direction: column; gap: 3px; width: 108px; }
        .cn { font: 400 25.500px/26px ${CJK}; letter-spacing: 2px; white-space: nowrap; }
        .en { font: 9.500px/10px "Liberation Sans", sans-serif; letter-spacing: .85px; color: #929db6; white-space: nowrap; }
      </style>
      <svg width="34" height="38" viewBox="0 0 34 38" fill="none" stroke="#ccd2de" stroke-width="3" stroke-linecap="round" stroke-linejoin="round">
        <path d="M4 9Q1.500 11 1.500 16V27Q1.500 34 8 35.500"/>
        <path d="M7.500 30V7Q8 2 13 4L29 14.500Q33 18 29 22L14 33"/>
        <path d="M14 14.500L21 19L14 23.500Z" fill="#ccd2de" stroke-width="1"/>
        <path d="M24 15V23" stroke-width="2"/>
      </svg>
      <div class="txt">
        <div class="cn">溜溜自学</div>
        <div class="en">ZIXUE.3D66.COM</div>
      </div>`;
  }
}

class TabStrip extends HTMLElement {
  constructor() {
    super();
    this.attachShadow({ mode: 'open' });
    this.shadowRoot.innerHTML = `
      <style>
        :host { display: flex; background: #ececec; color: #333; font: 8.5px/10px ${CJK}; overflow: hidden; filter: blur(.3px); }
        .tabs { display: flex; padding-left: 5px; flex: 1; }
        .tabs span { padding: 0 4px 0 7px; }
        .tabs span.on { padding-left: 4px; padding-right: 5px; background: #fafafa; }
        .tabs i { flex: none; width: 1px; height: 10px; background: #555; transform: skewX(25deg); }
        .scroll { width: 212px; height: 10px; background: #f5f5f5; border-left: 1px solid #aaa; box-sizing: border-box; display: flex; align-items: center; color: #555; font-size: 7px; padding-left: 5px; }
        .thumb { margin-left: 145px; width: 10px; height: 10px; background: #cfcfcf; }
        .end { margin-left: 18px; width: 11px; height: 10px; background: #e2e2e2; border-radius: 50%; }
      </style>
      <div class="tabs"><i></i><span>模型</span><i></i><span class="on">布局1</span><i></i></div>
      <div class="scroll">◂<span class="thumb"></span><span class="end"></span></div>`;
  }
}

customElements.define('tb-icon', TbIcon);
customElements.define('tb-sep', TbSep);
customElements.define('tb-combo', TbCombo);
customElements.define('layer-chips', LayerChips);
customElements.define('prop-row', PropRow);
customElements.define('filter-item', FilterItem);
customElements.define('wiz-button', WizButton);
customElements.define('prop-dialog', PropDialog);
customElements.define('brand-badge', BrandBadge);
customElements.define('menu-bar', MenuBar);
customElements.define('tool-bar', ToolBar);
customElements.define('cad-canvas', CadCanvas);
customElements.define('tab-strip', TabStrip);
customElements.define('cad-app', CadApp);
</script>
</body>
</html>
